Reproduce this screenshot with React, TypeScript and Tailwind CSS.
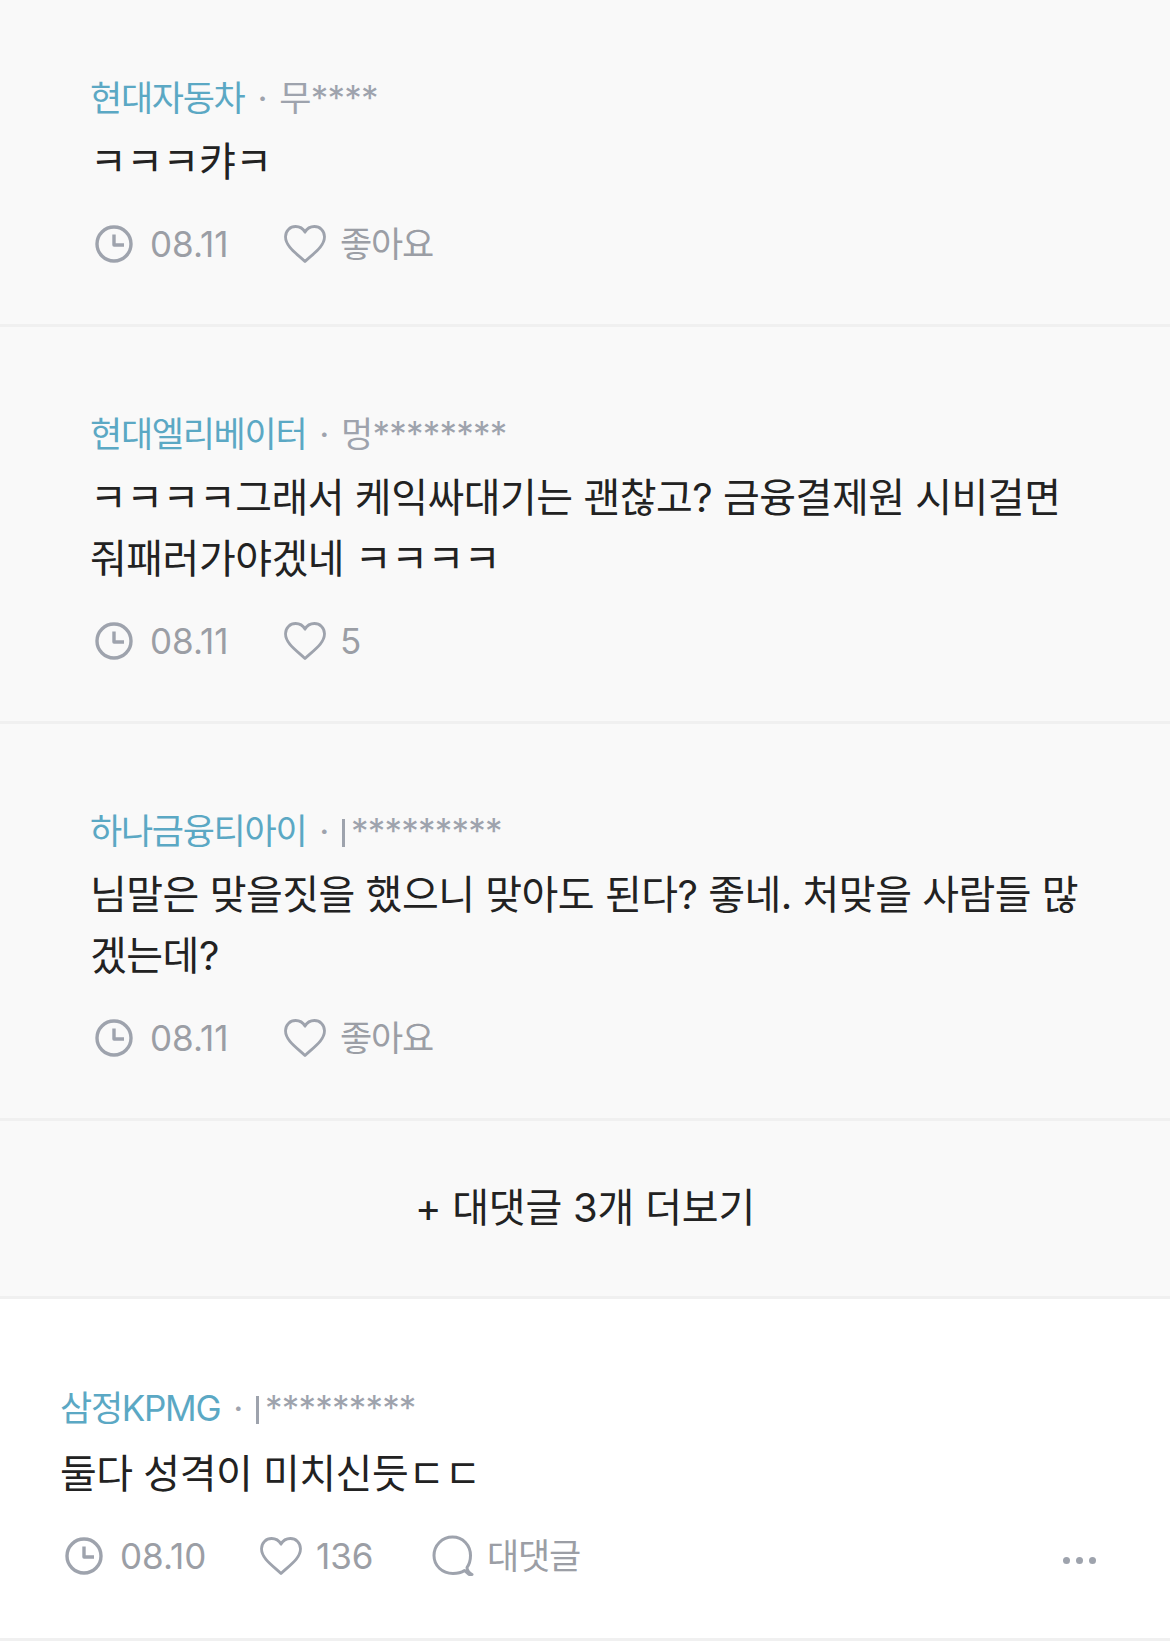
const ClockIcon = () => (
  <svg width="40" height="40" viewBox="0 0 40 40" fill="none" stroke="#9ea3ad" strokeWidth="3.4" className="shrink-0">
    <circle cx="20" cy="20" r="17" />
    <path d="M20 10.5V21H30" strokeLinejoin="round" />
  </svg>
);

const HeartIcon = () => (
  <svg width="44" height="40" viewBox="0 0 44 40" fill="none" stroke="#9ea3ad" strokeWidth="2.8" className="shrink-0">
    <path d="M22 37.5C15 30.5 2.5 23 2.5 12.8C2.5 6.8 7 2.5 12.6 2.5C16.4 2.5 20 4.5 22 8.2C24 4.5 27.600 2.500 31.400 2.500C37 2.500 41.500 6.800 41.500 12.800C41.500 23 29 30.500 22 37.500Z" strokeLinejoin="round" />
  </svg>
);

const BubbleIcon = () => (
  <svg width="42" height="42" viewBox="0 0 42 42" fill="none" stroke="#9ea3ad" strokeWidth="3" className="shrink-0">
    <path d="M37 39.500L32.500 35.500C29.500 37.500 26 38.500 21 38.500C10 38.500 2 30.500 2 20.500C2 10.500 10 2 20.500 2C31 2 38.500 10.500 38.500 20.500C38.500 25 37.500 29 35 32.500C35 35 36.500 37.500 40 39.500Z" strokeLinejoin="round" />
  </svg>
);

interface ReplyProps {
  company: string;
  user: string;
  body: string[];
  date: string;
  likes: string;
  first?: boolean;
}

function Meta({ company, user }: { company: string; user: string }) {
  const masked = user.startsWith("|");
  return (
    <div className="flex items-center text-[35px] leading-[40px] tracking-[-1.3px]">
      <span className="text-[#5ba8c4]">{company}</span>
      <span className="text-[#9ea3ad] mx-[13px]">·</span>
      {masked && <span className="w-[3px] h-[28px] mt-[4px] mr-[6px] ml-[1px] bg-[#9ea3ad]" />}
      <span className="text-[#9ea3ad] tracking-[-0.8px]">{masked ? user.slice(1) : user}</span>
    </div>
  );
}

function Stat({ text, numeric }: { text: string; numeric?: boolean }) {
  return (
    <span className={`text-[35px] leading-[40px] text-[#9b9ea5] ${numeric ? "tracking-[0px]" : "tracking-[-1.2px]"}`}>
      {text}
    </span>
  );
}

function Reply({ company, user, body, date, likes, first }: ReplyProps) {
  return (
    <div className={`pl-[90px] pr-[40px] pb-[58px] border-b-[3px] border-[#f0f0f0] ${first ? "pt-[78px]" : "pt-[87px]"}`}>
      <Meta company={company} user={user} />
      <div className="mt-[13px] text-[40px] leading-[61px] tracking-[-0.5px] text-[#222222]">
        {body.map((line) => (
          <div key={line}>{line}</div>
        ))}
      </div>
      <div className="mt-[30px] flex items-center h-[44px] pl-[4px]">
        <ClockIcon />
        <span className="ml-[16px] w-[133px]"><Stat text={date} numeric /></span>
        <HeartIcon />
        <span className="ml-[13px]"><Stat text={likes} numeric={likes === "5"} /></span>
      </div>
    </div>
  );
}

const replies: ReplyProps[] = [
  { company: "현대자동차", user: "무****", body: ["ㅋㅋㅋ캬ㅋ"], date: "08.11", likes: "좋아요", first: true },
  {
    company: "현대엘리베이터",
    user: "멍********",
    body: ["ㅋㅋㅋㅋ그래서 케익싸대기는 괜찮고? 금융결제원 시비걸면", "줘패러가야겠네 ㅋㅋㅋㅋ"],
    date: "08.11",
    likes: "5",
  },
  {
    company: "하나금융티아이",
    user: "|*********",
    body: ["님말은 맞을짓을 했으니 맞아도 된다? 좋네. 처맞을 사람들 많", "겠는데?"],
    date: "08.11",
    likes: "좋아요",
  },
];

export default function App() {
  return (
    <div className="w-[1170px] h-[1645px] overflow-hidden bg-white font-['Inter','Noto_Sans_CJK_KR',sans-serif]">
      <div className="bg-[#f9f9f9]">
        {replies.map((r) => (
          <Reply key={r.company} {...r} />
        ))}
        <div className="h-[178px] pb-[2px] flex items-center justify-center border-b-[3px] border-[#f0f0f0] text-[40px] tracking-[-0.2px] text-[#222222]">
          + 대댓글 3개 더보기
        </div>
      </div>

      {/* Top-level comment */}
      <div className="h-[342px] pl-[60px] pr-[60px] pt-[89px] border-b-[3px] border-[#f0f0f0]">
        <Meta company="삼정KPMG" user="|*********" />
        <div className="mt-[15px] text-[40px] leading-[61px] tracking-[-0.5px] text-[#222222]">
          둘다 성격이 미치신듯ㄷㄷ
        </div>
        <div className="mt-[30px] flex items-center h-[44px] pl-[4px]">
          <ClockIcon />
          <span className="ml-[16px] w-[139px]"><Stat text="08.10" numeric /></span>
          <HeartIcon />
          <span className="ml-[13px] w-[116px]"><Stat text="136" numeric /></span>
          <BubbleIcon />
          <span className="ml-[13px]"><Stat text="대댓글" /></span>
          <div className="ml-auto mr-[14px] mt-[8px] flex gap-[6px]">
            <span className="w-[7px] h-[7px] rounded-full bg-[#9ea3ad]" />
            <span className="w-[7px] h-[7px] rounded-full bg-[#9ea3ad]" />
            <span className="w-[7px] h-[7px] rounded-full bg-[#9ea3ad]" />
          </div>
        </div>
      </div>
    </div>
  );
}
